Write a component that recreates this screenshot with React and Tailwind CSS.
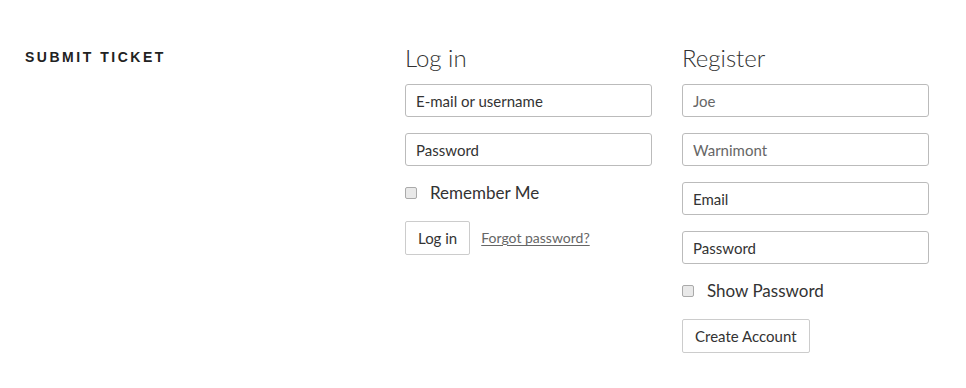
export default function App() {
  const input =
    'block h-[33px] w-[247px] rounded-[3px] border border-[#bbb] bg-white px-[10px] text-[15px] text-[#333] outline-none placeholder:text-[#333]'
  const soft = 'block h-[33px] w-[247px] rounded-[3px] border border-[#bbb] bg-white px-[10px] text-[15px] text-[#333] outline-none placeholder:text-[#666]'
  const box = 'h-[12px] w-[12px] rounded-[2px] border border-[#aaa] bg-[#e9e9e9]'

  return (
    <div className="min-h-[388px] bg-white pl-[25px] pt-[47px] text-[#333]" style={{ fontFamily: 'Lato, "Noto Sans", sans-serif' }}>
      <div className="flex">
        <div className="w-[380px]">
          <h2 className="text-[14px] font-black uppercase leading-[20px] tracking-[0.18em] text-[#222]" style={{ fontFamily: '"Liberation Sans", Arial, sans-serif' }}>
            Submit Ticket
          </h2>
        </div>

        <div className="w-[277px] -mt-[4px]">
          <h3 className="text-[24px] font-light leading-[30px] text-[#333]">Log in</h3>
          <div className="mt-[11px] space-y-[16px]">
            <input className={input} placeholder="E-mail or username" />
            <input className={input} type="password" placeholder="Password" />
          </div>
          <label className="mt-[17px] flex items-center text-[17px] leading-[20px]">
            <span className={box} />
            <span className="ml-[13px]">Remember Me</span>
          </label>
          <div className="mt-[18px] flex items-start">
            <button className="h-[34px] rounded-[2px] border border-[#ccc] bg-white px-[12px] text-[15px] text-[#333]">Log in</button>
            <a href="#" className="ml-[11px] mt-[6px] text-[14px] text-[#666] underline underline-offset-2">Forgot password?</a>
          </div>
        </div>

        <div className="w-[247px] -mt-[4px]">
          <h3 className="text-[24px] font-light leading-[30px] text-[#333]">Register</h3>
          <div className="mt-[11px] space-y-[16px]">
            <input className={soft} placeholder="Joe" />
            <input className={soft} placeholder="Warnimont" />
            <input className={input} placeholder="Email" />
            <input className={input} type="password" placeholder="Password" />
          </div>
          <label className="mt-[17px] flex items-center text-[17px] leading-[20px]">
            <span className={box} />
            <span className="ml-[13px]">Show Password</span>
          </label>
          <button className="mt-[18px] h-[34px] rounded-[2px] border border-[#ccc] bg-white px-[12px] text-[15px] text-[#333]">Create Account</button>
        </div>
      </div>
    </div>
  )
}
